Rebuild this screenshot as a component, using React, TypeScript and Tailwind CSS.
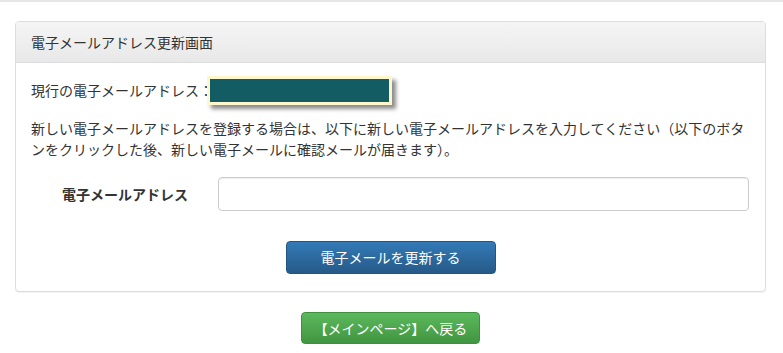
import React from 'react';

const App: React.FC = () => {
  return (
    <div
      className="min-h-[353px] bg-white text-[14px] leading-[21px] text-[#333]"
      style={{ fontFamily: '"Noto Sans CJK JP", "Noto Sans", sans-serif' }}
    >
      <div className="h-[2px] bg-[#e7e7e7]" />
      <div className="px-[15px] pt-[19px]">
        {/* panel */}
        <div className="w-[751px] overflow-hidden rounded-[4px] border border-[#dddddd] bg-white shadow-[0_1px_1px_rgba(0,0,0,0.05)]">
          <div className="flex h-[41px] items-center border-b border-[#dddddd] bg-gradient-to-b from-[#f5f5f5] to-[#e8e8e8] px-[15px]">
            電子メールアドレス更新画面
          </div>
          <div className="px-[15px] pb-[17px] pt-[13px]">
            <div className="flex h-[29px] items-center">
              <span>現行の電子メールアドレス：</span>
              <span className="ml-[-6px] inline-block border-[3px] border-[#fff6cc] shadow-[4px_4px_4px_rgba(0,0,0,0.45)]">
                <span className="block h-[23px] w-[179px] bg-[#145c63]" />
              </span>
            </div>
            <p className="mt-[13px]">
              新しい電子メールアドレスを登録する場合は、以下に新しい電子メールアドレスを入力してください（以下のボタンをクリックした後、新しい電子メールに確認メールが届きます）。
            </p>
            <div className="mt-[17px] flex items-center">
              <label className="w-[172px] pr-[15px] text-right font-bold">電子メールアドレス</label>
              <input
                type="text"
                className="ml-[15px] h-[34px] w-[531px] rounded-[4px] border border-[#cccccc] px-3 shadow-[inset_0_1px_1px_rgba(0,0,0,0.075)] outline-none"
              />
            </div>
            <div className="mt-[30px] flex justify-center">
              <button
                type="button"
                className="h-[33px] w-[210px] rounded-[4px] border border-[#245580] bg-gradient-to-b from-[#337ab7] to-[#265a88] text-white"
              >
                電子メールを更新する
              </button>
            </div>
          </div>
        </div>
        <div className="mt-[20px] flex w-[751px] justify-center">
          <button
            type="button"
            className="h-[32px] w-[179px] rounded-[4px] border border-[#3e8f3e] bg-gradient-to-b from-[#5cb85c] to-[#419641] text-white"
          >
            【メインページ】へ戻る
          </button>
        </div>
      </div>
    </div>
  );
};

export default App;
